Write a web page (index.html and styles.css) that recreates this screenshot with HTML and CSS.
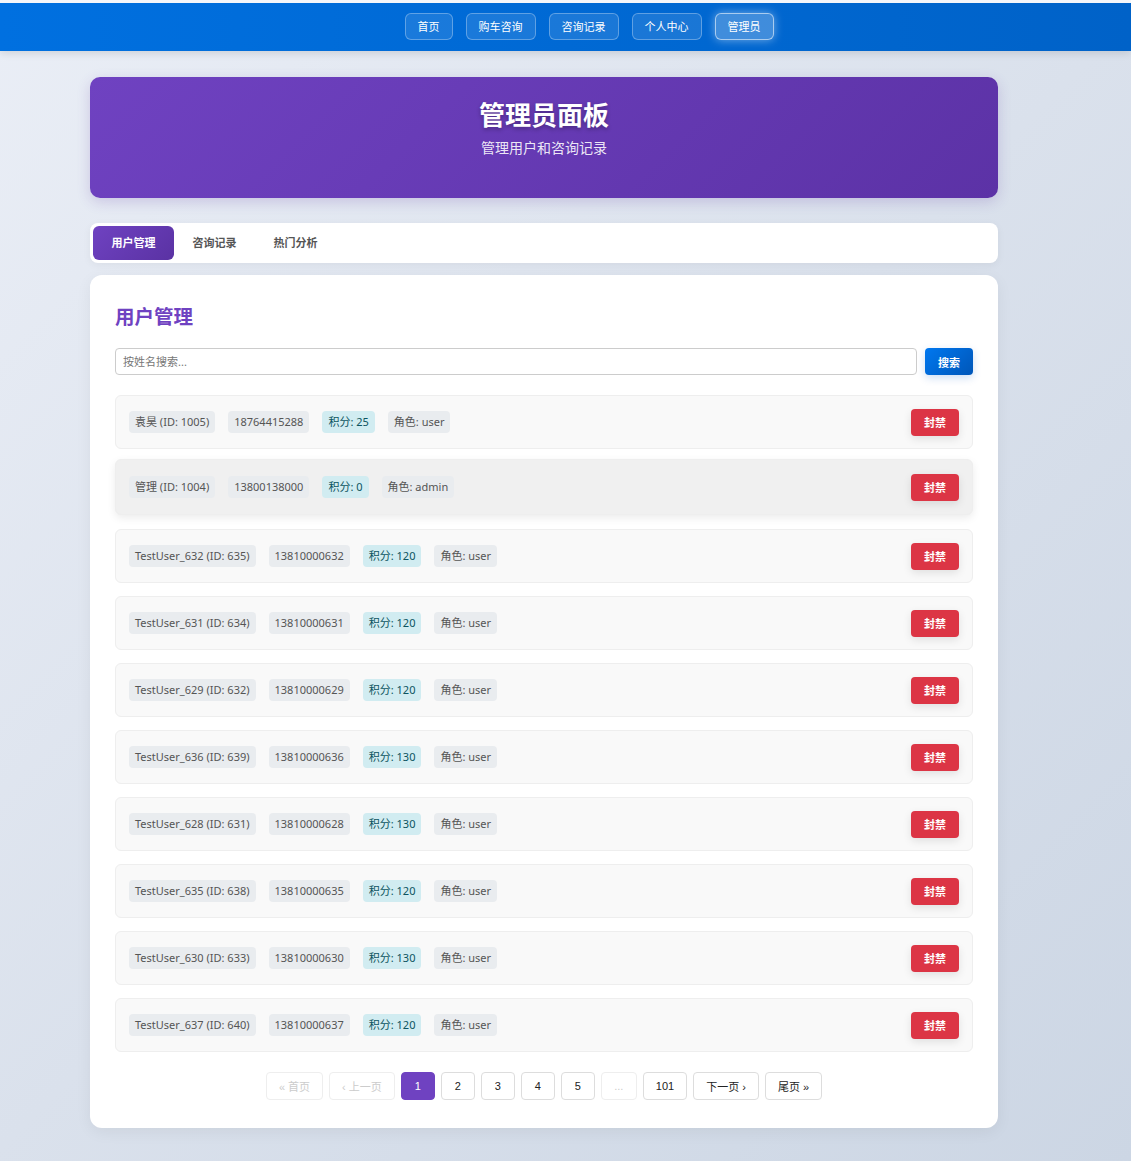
FILE: index.html
```html
<!DOCTYPE html>
<html lang="zh-CN">
<head>
  <meta charset="UTF-8" />
  <title>管理员面板</title>
  <link rel="stylesheet" href="styles.css">
</head>
<body>

  <nav class="topnav">
    <a href="#" class="nav-btn">首页</a>
    <a href="#" class="nav-btn">购车咨询</a>
    <a href="#" class="nav-btn">咨询记录</a>
    <a href="#" class="nav-btn">个人中心</a>
    <a href="#" class="nav-btn active">管理员</a>
  </nav>

  <div class="wrap">
    <header class="panel-head">
      <h1>管理员面板</h1>
      <p>管理用户和咨询记录</p>
    </header>

    <div class="tabs">
      <button class="tab active">用户管理</button>
      <button class="tab">咨询记录</button>
      <button class="tab">热门分析</button>
    </div>

    <section class="card">
      <h2>用户管理</h2>
      <div class="search">
        <input type="text" placeholder="按姓名搜索..." />
        <button class="search-btn">搜索</button>
      </div>

      <div class="user-list" id="userList"></div>

      <div class="pager">
        <button class="pg" disabled>« 首页</button>
        <button class="pg" disabled>‹ 上一页</button>
        <button class="pg num current">1</button>
        <button class="pg num">2</button>
        <button class="pg num">3</button>
        <button class="pg num">4</button>
        <button class="pg num">5</button>
        <button class="pg dots" disabled>...</button>
        <button class="pg">101</button>
        <button class="pg">下一页 ›</button>
        <button class="pg">尾页 »</button>
      </div>
    </section>
  </div>

  <script>
    const users = [
      ['袁昊', 1005, '18764415288', 25, 'user'],
      ['管理', 1004, '13800138000', 0, 'admin'],
      ['TestUser_632', 635, '13810000632', 120, 'user'],
      ['TestUser_631', 634, '13810000631', 120, 'user'],
      ['TestUser_629', 632, '13810000629', 120, 'user'],
      ['TestUser_636', 639, '13810000636', 130, 'user'],
      ['TestUser_628', 631, '13810000628', 130, 'user'],
      ['TestUser_635', 638, '13810000635', 120, 'user'],
      ['TestUser_630', 633, '13810000630', 130, 'user'],
      ['TestUser_637', 640, '13810000637', 120, 'user']
    ];
    const list = document.getElementById('userList');
    users.forEach((u, i) => {
      const row = document.createElement('div');
      row.className = 'user-row' + (i === 1 ? ' hover' : '');
      row.innerHTML =
        '<div class="info">' +
          '<span class="pill">' + u[0] + ' (ID: ' + u[1] + ')</span>' +
          '<span class="pill">' + u[2] + '</span>' +
          '<span class="pill points">积分: ' + u[3] + '</span>' +
          '<span class="pill">角色: ' + u[4] + '</span>' +
        '</div>' +
        '<button class="ban-btn">封禁</button>';
      list.appendChild(row);
    });
  </script>
</body>
</html>
```

FILE: styles.css
```css
* { box-sizing: border-box; margin: 0; padding: 0; }
html, body { min-height: 100%; }
body {
  font-family: "Noto Sans", "Noto Sans CJK SC", sans-serif;
  background: linear-gradient(135deg, #eaeef6 0%, #dae1ec 50%, #ccd6e4 100%);
  border-top: 3px solid #f4f6fa;
  min-height: 1161px;
  color: #333;
}

/* —— top nav —— */
.topnav {
  height: 48px;
  background: linear-gradient(90deg, #0070e0, #0062c8);
  display: flex;
  justify-content: center;
  align-items: center;
  gap: 13px;
  padding-left: 47px;
  padding-bottom: 2px;
  box-shadow: 0 2px 8px rgba(0,0,0,0.12);
}
.nav-btn {
  height: 27px;
  padding: 0 12px 1px;
  display: flex;
  align-items: center;
  font-size: 11px;
  color: #fff;
  text-decoration: none;
  background: rgba(255,255,255,0.1);
  border: 1px solid rgba(255,255,255,0.3);
  border-radius: 6px;
}
.nav-btn.active {
  background: rgba(255,255,255,0.25);
  border-color: rgba(255,255,255,0.55);
  box-shadow: 0 0 10px rgba(255,255,255,0.45);
}

.wrap { width: 908px; margin: 26px 0 0 90px; padding-bottom: 34px; }

/* —— header —— */
.panel-head {
  height: 121px;
  border-radius: 10px;
  background: linear-gradient(135deg, #6f42c1 0%, #5c32a6 100%);
  color: #fff;
  text-align: center;
  padding-top: 20px;
  box-shadow: 0 4px 14px rgba(90,50,160,0.2);
}
.panel-head h1 {
  font-size: 26px;
  font-weight: 700;
  line-height: 36px;
  text-shadow: 0 2px 4px rgba(0,0,0,0.3);
}
.panel-head p { font-size: 14px; margin-top: 4px; color: rgba(255,255,255,0.9); }

/* —— tabs —— */
.tabs {
  margin-top: 25px;
  background: #fff;
  border-radius: 8px;
  padding: 3px;
  display: flex;
  box-shadow: 0 2px 8px rgba(0,0,0,0.05);
}
.tab {
  width: 81px;
  height: 34px;
  padding-bottom: 3px;
  border: none;
  background: none;
  border-radius: 6px;
  font-family: inherit;
  font-size: 11px;
  font-weight: 700;
  color: #555;
}
.tab.active { background: linear-gradient(135deg, #6f42c1, #5a32a3); color: #fff; }

/* —— card —— */
.card {
  margin-top: 12px;
  background: #fff;
  border-radius: 12px;
  padding: 27px 25px 28px;
  box-shadow: 0 4px 16px rgba(0,0,0,0.06);
}
.card h2 { font-size: 19.5px; font-weight: 700; color: #6f42c1; line-height: 30px; margin-bottom: 16px; }

.search { display: flex; gap: 8px; margin-bottom: 20px; }
.search input {
  flex: 1;
  height: 27px;
  border: 1px solid #ccc;
  border-radius: 4px;
  padding: 0 7px;
  font-family: inherit;
  font-size: 11px;
}
.search input::placeholder { color: #777; }
.search-btn {
  width: 48px;
  height: 27px;
  border: none;
  border-radius: 4px;
  background: linear-gradient(135deg, #0078f0, #0056b8);
  color: #fff;
  font-family: inherit;
  font-size: 11px;
  font-weight: 700;
  box-shadow: 0 3px 8px rgba(0,90,200,0.2);
}

/* —— user rows —— */
.user-list { display: flex; flex-direction: column; gap: 13px; }
.user-row {
  height: 54px;
  display: flex;
  align-items: center;
  justify-content: space-between;
  padding: 0 13px;
  background: #f9f9f9;
  border: 1px solid #eee;
  border-radius: 6px;
}
.user-row.hover {
  background: #f0f0f0;
  transform: translateY(-3px);
  height: 56px;
  margin-bottom: -2px;
  box-shadow: 0 3px 8px rgba(0,0,0,0.08);
}
.info { display: flex; align-items: center; gap: 13px; }
.pill {
  background: #e9ecef;
  color: #555;
  font-size: 11px;
  padding: 3px 6px;
  border-radius: 4px;
  line-height: 16px;
}
.pill.points { background: #d1ecf1; color: #0c5460; }
.ban-btn {
  width: 48px;
  height: 27px;
  border: none;
  border-radius: 4px;
  background: #dc3545;
  color: #fff;
  font-family: inherit;
  font-size: 11px;
  font-weight: 700;
  box-shadow: 0 3px 8px rgba(0,0,0,0.1);
}

/* —— pagination —— */
.pager { display: flex; justify-content: center; gap: 6px; margin-top: 20px; }
.pg {
  height: 28px;
  min-width: 34px;
  padding: 0 12px;
  background: #fff;
  border: 1px solid #ddd;
  border-radius: 4px;
  font-family: "Liberation Sans", "Noto Sans CJK SC", sans-serif;
  font-size: 11px;
  color: #222;
}
.pg.num { padding: 0; }
.pg.dots { min-width: 36px; }
.pg.current { background: #6f42c1; border-color: #6f42c1; color: #fff; }
.pg:disabled { color: #ccc; border-color: #eee; }
```
